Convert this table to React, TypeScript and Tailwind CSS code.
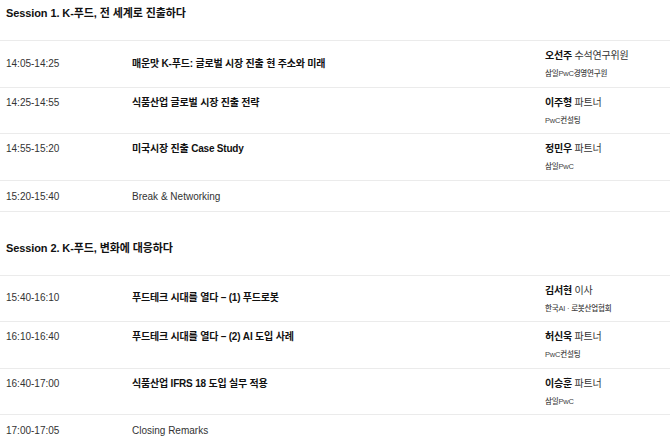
import React from "react";

type Row = {
	time: string;
	title: string;
	bold?: boolean;
	name?: string;
	role?: string;
	org?: string;
};

const sessions: { heading: string; rows: Row[] }[] = [
	{
		heading: "Session 1. K-푸드, 전 세계로 진출하다",
		rows: [
			{
				time: "14:05-14:25",
				title: "매운맛 K-푸드: 글로벌 시장 진출 현 주소와 미래",
				bold: true,
				name: "오선주",
				role: "수석연구위원",
				org: "삼일PwC경영연구원",
			},
			{
				time: "14:25-14:55",
				title: "식품산업 글로벌 시장 진출 전략",
				bold: true,
				name: "이주형",
				role: "파트너",
				org: "PwC컨설팅",
			},
			{
				time: "14:55-15:20",
				title: "미국시장 진출 Case Study",
				bold: true,
				name: "정민우",
				role: "파트너",
				org: "삼일PwC",
			},
			{ time: "15:20-15:40", title: "Break & Networking" },
		],
	},
	{
		heading: "Session 2. K-푸드, 변화에 대응하다",
		rows: [
			{
				time: "15:40-16:10",
				title: "푸드테크 시대를 열다 – (1) 푸드로봇",
				bold: true,
				name: "김서현",
				role: "이사",
				org: "한국AI · 로봇산업협회",
			},
			{
				time: "16:10-16:40",
				title: "푸드테크 시대를 열다 – (2) AI 도입 사례",
				bold: true,
				name: "허신욱",
				role: "파트너",
				org: "PwC컨설팅",
			},
			{
				time: "16:40-17:00",
				title: "식품산업 IFRS 18 도입 실무 적용",
				bold: true,
				name: "이승훈",
				role: "파트너",
				org: "삼일PwC",
			},
			{ time: "17:00-17:05", title: "Closing Remarks" },
		],
	},
];

const AgendaRow = ({ row, first }: { row: Row; first: boolean }) => {
	if (!row.name) {
		// plain row without speaker
		return (
			<div className="flex h-[31px] items-start border-b border-[#ebebeb] px-[6px] pt-[9px] text-[10px] leading-[14px] text-[#333]">
				<div className="w-[126px] shrink-0">{row.time}</div>
				<div className="flex-1">{row.title}</div>
			</div>
		);
	}
	return (
		<div
			className={`flex h-[46.5px] border-b border-[#ebebeb] px-[6px] ${
				first ? "items-center" : "items-start pt-[8px]"
			}`}
		>
			<div className="w-[126px] shrink-0 text-[10px] leading-[14px] text-[#333]">
				{row.time}
			</div>
			<div className="flex-1 text-[10px] font-bold leading-[14px] text-[#111] tracking-[-0.2px]">
				{row.title}
			</div>
			<div
				className={`w-[119px] shrink-0 ${first ? "self-start pt-[8px]" : ""}`}
			>
				<div className="text-[10px] leading-[14px] text-[#333] tracking-[-0.2px]">
					<span className="font-bold text-[#111]">{row.name}</span> {row.role}
				</div>
				<div className="mt-[6px] text-[7.5px] font-medium leading-[10px] text-[#444] tracking-[-0.2px]">
					{row.org}
				</div>
			</div>
		</div>
	);
};

export default function App() {
	return (
		<div
			className="h-[445px] w-[670px] overflow-hidden bg-white"
			style={{ fontFamily: '"Liberation Sans", "Noto Sans CJK KR", sans-serif' }}
		>
			{sessions.map((s, si) => (
				<div key={s.heading} className={si > 0 ? "pt-[23px]" : ""}>
					<div className="h-[41px] border-b border-[#ebebeb] px-[6px] pt-[6px] text-[11px] font-bold leading-[14px] text-[#111] tracking-[-0.1px]">
						{s.heading}
					</div>
					{s.rows.map((r, i) => (
						<AgendaRow key={r.time} row={r} first={i === 0} />
					))}
				</div>
			))}
		</div>
	);
}
